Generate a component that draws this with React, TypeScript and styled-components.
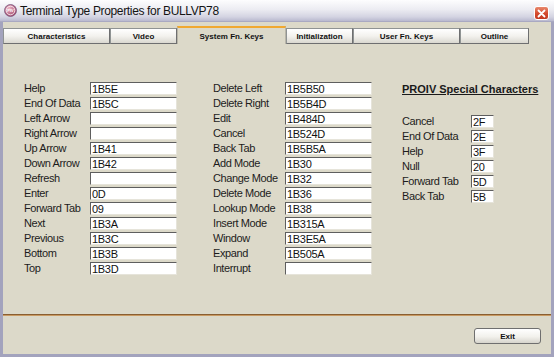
import React from 'react'
import styled, { createGlobalStyle, css } from 'styled-components'

const GlobalStyle = createGlobalStyle`
  html,
  body {
    margin: 0;
    padding: 0;
    background: #fff;
  }

  body {
    font-family: 'Liberation Sans', Arial, sans-serif;
    color: #111;
  }
`

const Window = styled.div`
  width: 554px;
  height: 357px;
  display: flex;
  flex-direction: column;
  overflow: hidden;
`

const TitleBar = styled.div`
  height: 22px;
  flex: 0 0 22px;
  box-sizing: border-box;
  display: flex;
  align-items: center;
  padding: 0 5px 0 4px;
  background: linear-gradient(#fdfdfe 0%, #ececf2 45%, #d4d4e2 80%, #b9b9cf 100%);
  border-bottom: 1px solid #a9a9c2;
`

const TitleText = styled.span`
  flex: 1;
  margin-left: 3px;
  font-size: 12px;
  letter-spacing: -0.35px;
  color: #141414;
  white-space: nowrap;
`

const CloseButton = styled.div`
  width: 15px;
  height: 14px;
  box-sizing: border-box;
  border: 1px solid #fff;
  border-radius: 3px;
  background: linear-gradient(#e8896e, #d4492c 55%, #c23a22);
  display: flex;
  align-items: center;
  justify-content: center;
  margin-top: 5px;
`

const Frame = styled.div`
  flex: 1;
  display: flex;
  flex-direction: column;
  background: #dcd9c9;
  border-style: solid;
  border-color: #a3a3bd;
  border-width: 0 3px 3px 3px;
`

const TabStrip = styled.div`
  display: flex;
  align-items: flex-end;
  height: 22px;
  box-sizing: border-box;
  padding-top: 4px;
`

const activeTab = css`
  height: 18px;
  background: #dcd9c9;
  border-top: 2px solid #f0a830;
  border-left: 1px solid #b8b5a8;
  border-right: 1px solid #b8b5a8;
`

const inactiveTab = css`
  height: 16px;
  background: linear-gradient(#ffffff 0%, #f3f2ee 50%, #dad8d0 100%);
  border: 1px solid #8f9393;
  border-right-color: #6e6f70;
  border-bottom-color: #6e6f70;
`

const Tab = styled.div<{ $width: number; $active?: boolean }>`
  width: ${(p) => p.$width}px;
  box-sizing: border-box;
  display: flex;
  align-items: center;
  justify-content: center;
  font-size: 8px;
  font-weight: bold;
  color: #111;
  white-space: nowrap;
  ${(p) => (p.$active ? activeTab : inactiveTab)}
`

const Content = styled.div`
  flex: 1;
  display: flex;
  align-items: flex-start;
  padding: 38px 0 0 21px;
`

const Column = styled.div<{ $gap: number }>`
  margin-left: ${(p) => p.$gap}px;
  display: flex;
  flex-direction: column;
`

const FieldGrid = styled.div<{ $label: number; $input: number }>`
  display: grid;
  grid-template-columns: ${(p) => p.$label}px ${(p) => p.$input}px;
  grid-auto-rows: 13px;
  row-gap: 2px;
  align-items: center;
`

const Label = styled.span`
  font-size: 11px;
  line-height: 13px;
  letter-spacing: -0.4px;
  white-space: nowrap;
  color: #1c1c1c;
`

const Field = styled.input`
  box-sizing: border-box;
  width: 100%;
  height: 13px;
  margin: 0;
  padding: 0 0 0 1px;
  font-family: 'Liberation Sans', Arial, sans-serif;
  font-size: 11px;
  line-height: 11px;
  letter-spacing: -0.3px;
  color: #111;
  background: #fff;
  border: 1px solid;
  border-color: #5e5e5e #e6e4da #e6e4da #5e5e5e;
  outline: none;
`

const SectionHeader = styled.div`
  font-size: 11px;
  font-weight: bold;
  line-height: 14px;
  text-decoration: underline;
  color: #1a1a1a;
  white-space: nowrap;
  margin-bottom: 19px;
`

const Footer = styled.div`
  display: flex;
  flex-direction: column;
  align-items: flex-end;
  height: 40px;
  box-sizing: border-box;
  border-top: 1px solid #8a5f32;
  box-shadow: inset 0 1px 0 #c99a62;
  padding: 13px 10px 0 0;
`

const Button = styled.div`
  width: 67px;
  height: 16px;
  box-sizing: border-box;
  border: 1px solid #6f6f6f;
  border-radius: 3px;
  background: linear-gradient(#ffffff 0%, #f2f1ec 55%, #d6d4cc 100%);
  display: flex;
  align-items: center;
  justify-content: center;
  font-size: 8px;
  font-weight: bold;
  color: #111;
`

const tabs = [
  { name: 'Characteristics', width: 107 },
  { name: 'Video', width: 67 },
  { name: 'System Fn. Keys', width: 109, active: true },
  { name: 'Initialization', width: 67 },
  { name: 'User Fn. Keys', width: 107 },
  { name: 'Outline', width: 69 },
]

const navKeys: [string, string][] = [
  ['Help', '1B5E'],
  ['End Of Data', '1B5C'],
  ['Left Arrow', ''],
  ['Right Arrow', ''],
  ['Up Arrow', '1B41'],
  ['Down Arrow', '1B42'],
  ['Refresh', ''],
  ['Enter', '0D'],
  ['Forward Tab', '09'],
  ['Next', '1B3A'],
  ['Previous', '1B3C'],
  ['Bottom', '1B3B'],
  ['Top', '1B3D'],
]

const editKeys: [string, string][] = [
  ['Delete Left', '1B5B50'],
  ['Delete Right', '1B5B4D'],
  ['Edit', '1B484D'],
  ['Cancel', '1B524D'],
  ['Back Tab', '1B5B5A'],
  ['Add Mode', '1B30'],
  ['Change Mode', '1B32'],
  ['Delete Mode', '1B36'],
  ['Lookup Mode', '1B38'],
  ['Insert Mode', '1B315A'],
  ['Window', '1B3E5A'],
  ['Expand', '1B505A'],
  ['Interrupt', ''],
]

const specialChars: [string, string][] = [
  ['Cancel', '2F'],
  ['End Of Data', '2E'],
  ['Help', '3F'],
  ['Null', '20'],
  ['Forward Tab', '5D'],
  ['Back Tab', '5B'],
]

function AppIcon() {
  return (
    <svg width="13" height="13" viewBox="0 0 13 13">
      <defs>
        <radialGradient id="ic" cx="40%" cy="35%" r="70%">
          <stop offset="0%" stopColor="#f0b8c8" />
          <stop offset="100%" stopColor="#9a3c63" />
        </radialGradient>
      </defs>
      <circle cx="6.5" cy="6.5" r="6" fill="url(#ic)" stroke="#7a5a80" strokeWidth="0.8" />
      <circle cx="6.5" cy="6.5" r="4.3" fill="none" stroke="#fff" strokeWidth="0.8" />
      <text x="6.5" y="8" fontSize="4" fontFamily="Liberation Sans, sans-serif" fontWeight="bold" fill="#fff" textAnchor="middle">
        PIV
      </text>
    </svg>
  )
}

function FieldList({ rows, label, input }: { rows: [string, string][]; label: number; input: number }) {
  return (
    <FieldGrid $label={label} $input={input}>
      {rows.map(([name, value]) => (
        <React.Fragment key={name}>
          <Label>{name}</Label>
          <Field readOnly value={value} />
        </React.Fragment>
      ))}
    </FieldGrid>
  )
}

export default function App() {
  return (
    <Window>
      <GlobalStyle />
      <TitleBar>
        <AppIcon />
        <TitleText>Terminal Type Properties for BULLVP78</TitleText>
        <CloseButton>
          <svg width="9" height="9" viewBox="0 0 9 9">
            <path d="M1.5 1.5 L7.5 7.5 M7.5 1.5 L1.5 7.5" stroke="#fff" strokeWidth="1.8" strokeLinecap="round" />
          </svg>
        </CloseButton>
      </TitleBar>
      <Frame>
        <TabStrip>
          {tabs.map((t) => (
            <Tab key={t.name} $width={t.width} $active={t.active}>
              {t.name}
            </Tab>
          ))}
        </TabStrip>
        <Content>
          <Column $gap={0}>
            <FieldList rows={navKeys} label={66} input={87} />
          </Column>
          <Column $gap={36}>
            <FieldList rows={editKeys} label={72} input={87} />
          </Column>
          <Column $gap={30}>
            <SectionHeader>PROIV Special Characters</SectionHeader>
            <FieldList rows={specialChars} label={69} input={23} />
          </Column>
        </Content>
        <Footer>
          <Button>Exit</Button>
        </Footer>
      </Frame>
    </Window>
  )
}
